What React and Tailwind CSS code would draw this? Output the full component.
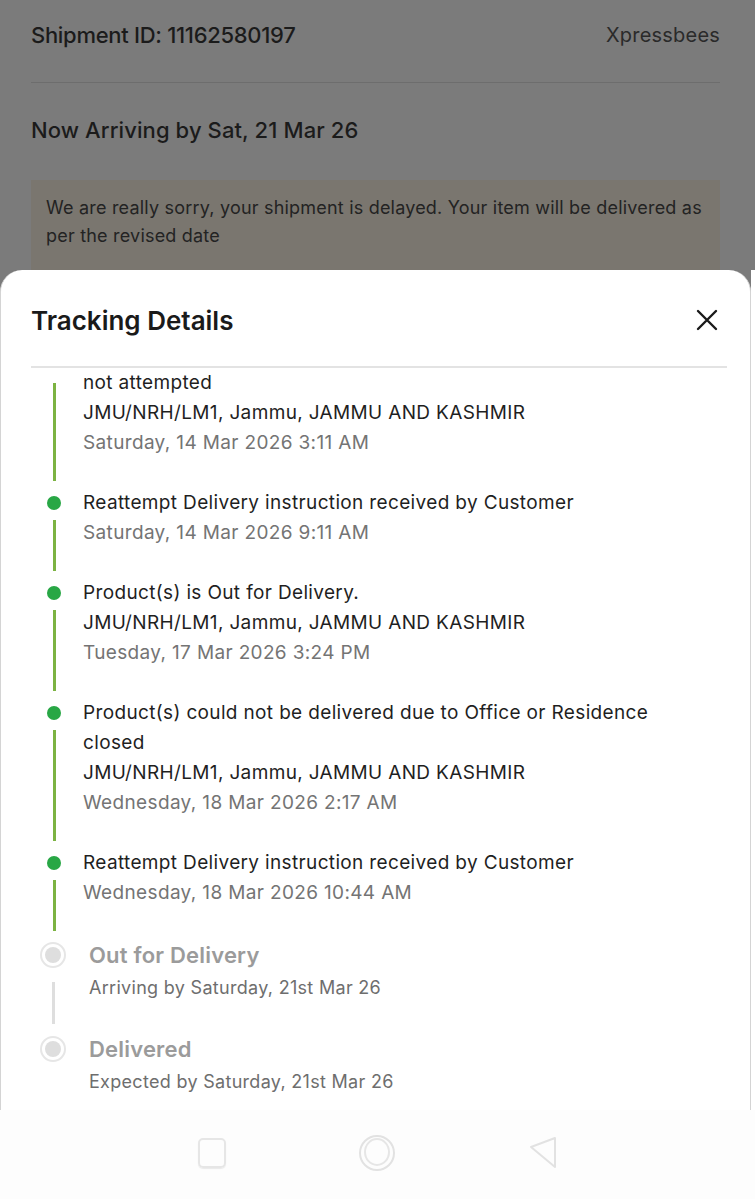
import React from "react";

const events = [
  {
    lines: ["not attempted", "JMU/NRH/LM1, Jammu, JAMMU AND KASHMIR"],
    date: "Saturday, 14 Mar 2026 3:11 AM",
    partial: true,
  },
  {
    lines: ["Reattempt Delivery instruction received by Customer"],
    date: "Saturday, 14 Mar 2026 9:11 AM",
  },
  {
    lines: ["Product(s) is Out for Delivery.", "JMU/NRH/LM1, Jammu, JAMMU AND KASHMIR"],
    date: "Tuesday, 17 Mar 2026 3:24 PM",
  },
  {
    lines: [
      "Product(s) could not be delivered due to Office or Residence closed",
      "JMU/NRH/LM1, Jammu, JAMMU AND KASHMIR",
    ],
    date: "Wednesday, 18 Mar 2026 2:17 AM",
  },
  {
    lines: ["Reattempt Delivery instruction received by Customer"],
    date: "Wednesday, 18 Mar 2026 10:44 AM",
  },
];

const future = [
  { title: "Out for Delivery", sub: "Arriving by Saturday, 21st Mar 26", line: true },
  { title: "Delivered", sub: "Expected by Saturday, 21st Mar 26", line: false },
];

function EventRow({ ev }) {
  return (
    <div className="flex">
      <div className="w-[82px] shrink-0 pl-[46px]">
        <div className="flex h-full w-[14px] flex-col items-center">
          {ev.partial ? (
            <div className="h-[13px]" />
          ) : (
            <div className="flex h-[30px] items-center">
              <div className="h-[14px] w-[14px] rounded-full bg-[#28a745]" />
            </div>
          )}
          <div className="mb-[7px] mt-[2px] w-[3px] flex-1 bg-[#7cb342]" />
        </div>
      </div>
      <div className="pb-[30px] pr-[50px] text-[19px] leading-[30px] tracking-[0.35px] text-[#1f1f1f]">
        {ev.lines.map((l, i) => (
          <div key={i}>{l}</div>
        ))}
        <div className="text-[#747474]">{ev.date}</div>
      </div>
    </div>
  );
}

function FutureRow({ f }) {
  return (
    <div className="flex">
      <div className="w-[88px] shrink-0 pl-[39px]">
        <div className="flex h-full w-[26px] flex-col items-center">
          <div className="flex h-[34px] items-center">
            <div className="flex h-[26px] w-[26px] items-center justify-center rounded-full border-2 border-[#e6e6e6] bg-white">
              <div className="h-[16px] w-[16px] rounded-full bg-[#dedede]" />
            </div>
          </div>
          {f.line && <div className="mb-[8px] mt-[10px] w-[3px] flex-1 bg-[#dedede]" />}
        </div>
      </div>
      <div className="pb-[29px]">
        <div className="text-[22px] font-semibold leading-[34px] tracking-[0.2px] text-[#9b9b9b]">{f.title}</div>
        <div className="mt-[1px] text-[18px] leading-[30px] tracking-[0.3px] text-[#6e6e6e]">{f.sub}</div>
      </div>
    </div>
  );
}

export default function App() {
  return (
    <div
      className="flex h-[1199px] w-[755px] flex-col overflow-hidden bg-[#7b7b7b]"
      style={{ fontFamily: "Inter, 'Noto Sans', sans-serif" }}
    >
      {/* dimmed page behind sheet */}
      <div className="h-[270px] shrink-0 overflow-hidden px-[31px] pt-[20px]">
        <div className="flex h-[30px] items-center justify-between pr-[4px]">
          <div className="text-[22px] font-medium tracking-[-0.3px] text-[#1b1b1b]">
            Shipment ID: 11162580197
          </div>
          <div className="text-[20px] tracking-[0.2px] text-[#2a2a2a]">Xpressbees</div>
        </div>
        <div className="mt-[32px] h-px w-[689px] bg-[#6d6d6d]" />
        <div className="mt-[31px] h-[32px] text-[22px] font-medium leading-[32px] tracking-[0.1px] text-[#1b1b1b]">
          Now Arriving by Sat, 21 Mar 26
        </div>
        <div className="mt-[34px] h-[120px] w-[689px] bg-[#7a766f] px-[15px] pt-[14px] text-[18px] leading-[28px] tracking-[0.2px] text-[#232323]">
          We are really sorry, your shipment is delayed. Your item will be delivered as per the revised date
        </div>
      </div>

      {/* bottom sheet */}
      <div className="flex h-[840px] shrink-0">
        <div className="flex w-[751px] flex-col overflow-hidden rounded-t-[22px] border-x border-[#d4d4d4] bg-white">
          <div className="flex h-[96px] shrink-0 items-center justify-between pl-[30px] pr-[30px] pt-[4px]">
            <div className="text-[26px] font-semibold tracking-[0px] text-[#1a1a1a]">Tracking Details</div>
            <svg width="24" height="24" viewBox="0 0 24 24" className="mr-[1px]">
              <path d="M3 3 L21 21 M21 3 L3 21" stroke="#1a1a1a" strokeWidth="2.4" strokeLinecap="round" />
            </svg>
          </div>
          <div className="ml-[30px] mr-[23px] h-[2px] shrink-0 bg-[#e3e3e3]" />
          <div className="flex-1 overflow-hidden">
            <div className="flex flex-col">
              {events.map((ev, i) => (
                <EventRow key={i} ev={ev} />
              ))}
              <div>
                {future.map((f, i) => (
                  <FutureRow key={i} f={f} />
                ))}
              </div>
            </div>
          </div>
        </div>
        <div className="flex-1 bg-white" />
      </div>

      {/* nav bar */}
      <div className="flex h-[89px] shrink-0 items-center justify-center bg-[#fdfdfd] pb-[4px]">
        <div className="flex w-[360px] items-center justify-between">
          <div className="h-[30px] w-[28px] rounded-[5px] border-2 border-[#e6e6e6] shadow-[0_1px_1px_rgba(0,0,0,0.08)]" />
          <svg width="40" height="40" viewBox="0 0 40 40">
            <ellipse cx="20" cy="20" rx="17" ry="17" fill="none" stroke="#e2e2e2" strokeWidth="2" />
            <ellipse cx="20" cy="19" rx="12" ry="13" fill="none" stroke="#e6e6e6" strokeWidth="2" />
          </svg>
          <svg width="30" height="34" viewBox="0 0 30 34">
            <path d="M27 2 L27 31 L3 11 Z" fill="none" stroke="#e2e2e2" strokeWidth="2" strokeLinejoin="round" />
          </svg>
        </div>
      </div>
    </div>
  );
}
